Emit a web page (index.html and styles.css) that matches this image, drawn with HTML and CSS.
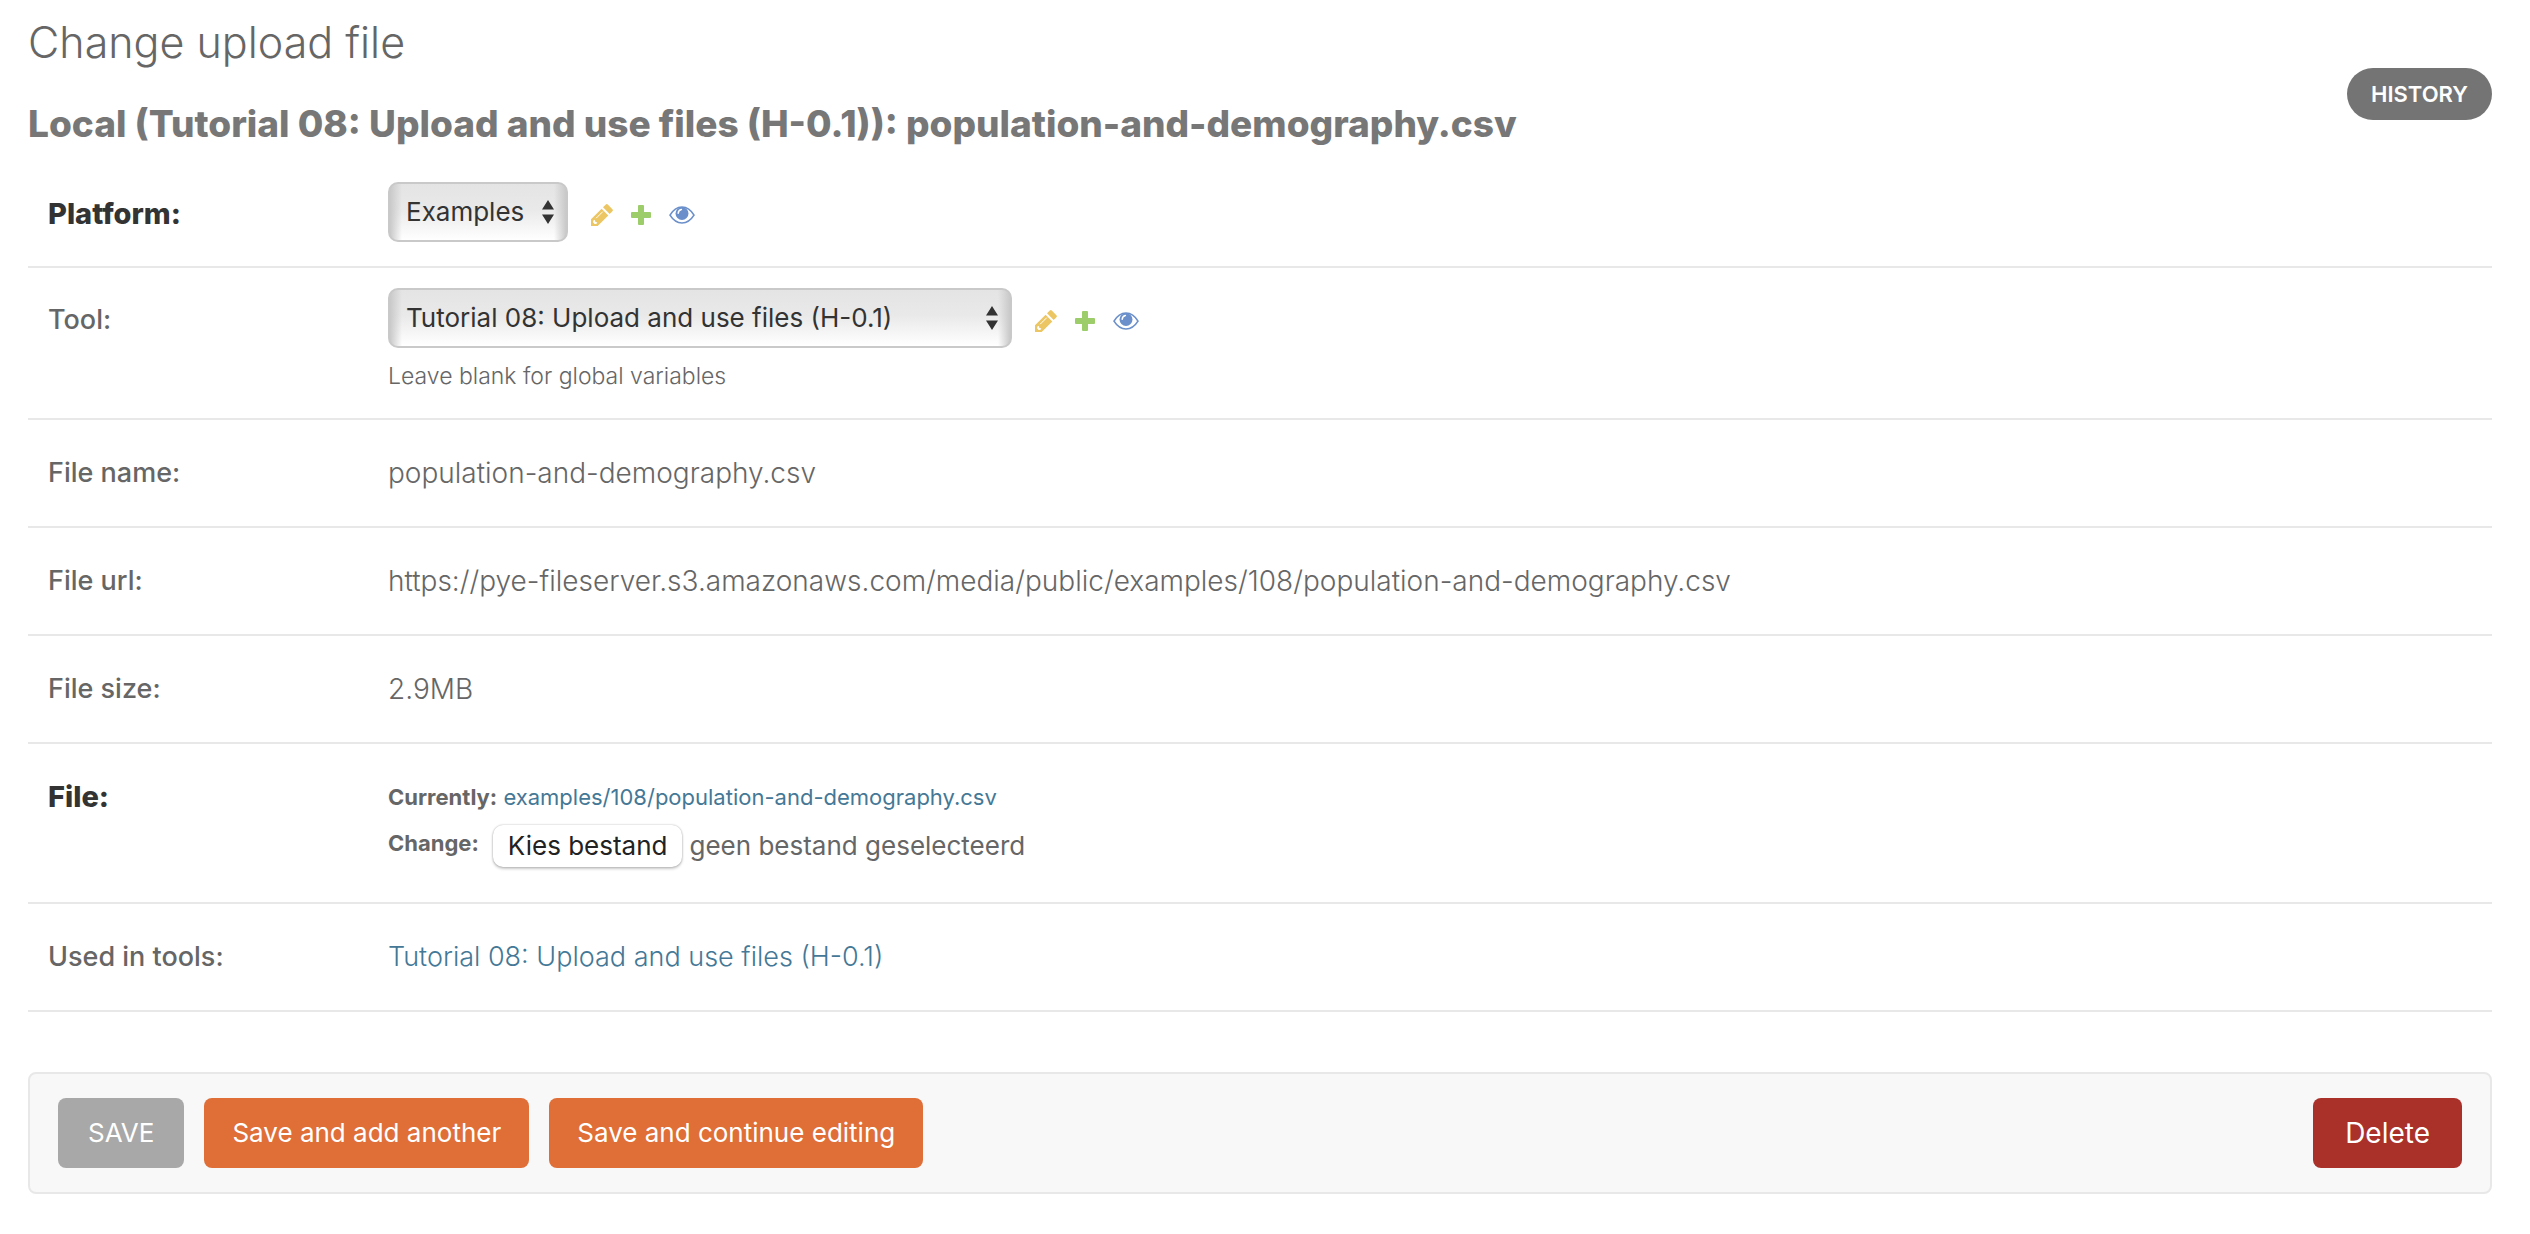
FILE: index.html
```html
<!DOCTYPE html>
<html lang="en">
<head>
  <meta charset="UTF-8">
  <title>Change upload file</title>
  <meta name="viewport" content="width=device-width, initial-scale=1.0">
  <link rel="stylesheet" href="styles.css">
</head>
<body>
  <!-- Icon sprites -->
  <svg class="sprites" aria-hidden="true">
    <symbol id="icon-change" viewBox="0 0 22 22">
      <path fill="#ecc663" d="M0 22V15.300L10.600 4.700l6.700 6.700L6.700 22zM12 3.300L14.800.6q1-1 2 0l4.600 4.600q1 1 0 2L18.700 10z"/>
      <path fill="#fff" d="M2.200 16.800l1.500-1 .6 2 2 .6-1 1.600H3.600l-1.400-1.400z"/>
      <path stroke="#fff" stroke-width="1" d="M5.200 14.200l6.500-6.500"/>
    </symbol>
    <symbol id="icon-add" viewBox="0 0 20 20">
      <path fill="#9dcd6b" d="M8 0h4q1 0 1 1v6h6q1 0 1 1v4q0 1-1 1h-6v6q0 1-1 1H8q-1 0-1-1v-6H1q-1 0-1-1V8q0-1 1-1h6V1q0-1 1-1z"/>
    </symbol>
    <symbol id="icon-view" viewBox="0 0 26 18">
      <path fill="none" stroke="#6a8fca" stroke-width="1.600" d="M1 9.200C4 4 8 1 13 1s9 3 12 8.200C22 14 18 17 13 17S4 14 1 9.200z"/>
      <circle cx="13" cy="7.500" r="6.500" fill="#6a8fca"/>
      <path fill="none" stroke="#fff" stroke-width="1.500" stroke-linecap="round" d="M9.200 7.200q.2-3 3.200-3.700"/>
    </symbol>
    <symbol id="icon-arrows" viewBox="0 0 12 24">
      <path fill="#333" d="M6 0l6 9.500H0zM0 14.500h12L6 24z"/>
    </symbol>
  </svg>

  <main class="content">
    <h1 class="title">Change upload file</h1>
    <div class="object-header">
      <h2 class="object-name">Local (Tutorial 08: Upload and use files (H-0.1)): population-and-demography.csv</h2>
      <a class="history-link" href="#">HISTORY</a>
    </div>

    <form>
      <div class="form-row form-row-field">
        <label class="row-label required" for="id_platform">Platform:</label>
        <div class="related-widget">
          <div class="select-box">
            <select id="id_platform" class="select select-platform">
              <option>Examples</option>
            </select>
            <svg class="select-arrows"><use href="#icon-arrows"/></svg>
          </div>
          <a class="related-link" href="#" title="Change"><svg class="icon-change"><use href="#icon-change"/></svg></a>
          <a class="related-link" href="#" title="Add"><svg class="icon-add"><use href="#icon-add"/></svg></a>
          <a class="related-link" href="#" title="View"><svg class="icon-view"><use href="#icon-view"/></svg></a>
        </div>
      </div>

      <div class="form-row form-row-field">
        <label class="row-label" for="id_tool">Tool:</label>
        <div>
          <div class="related-widget">
            <div class="select-box">
              <select id="id_tool" class="select select-tool">
                <option>Tutorial 08: Upload and use files (H-0.1)</option>
              </select>
              <svg class="select-arrows"><use href="#icon-arrows"/></svg>
            </div>
            <a class="related-link" href="#" title="Change"><svg class="icon-change"><use href="#icon-change"/></svg></a>
            <a class="related-link" href="#" title="Add"><svg class="icon-add"><use href="#icon-add"/></svg></a>
            <a class="related-link" href="#" title="View"><svg class="icon-view"><use href="#icon-view"/></svg></a>
          </div>
          <p class="help">Leave blank for global variables</p>
        </div>
      </div>

      <div class="form-row">
        <span class="row-label">File name:</span>
        <span class="readonly">population-and-demography.csv</span>
      </div>
      <div class="form-row">
        <span class="row-label">File url:</span>
        <span class="readonly">https://pye-fileserver.s3.amazonaws.com/media/public/examples/108/population-and-demography.csv</span>
      </div>
      <div class="form-row">
        <span class="row-label">File size:</span>
        <span class="readonly">2.9MB</span>
      </div>

      <div class="form-row">
        <label class="row-label required" for="id_file">File:</label>
        <div class="file-upload">
          <div><b>Currently:</b> <a href="#">examples/108/population-and-demography.csv</a></div>
          <div class="file-change">
            <b class="file-change-label">Change:</b>
            <input type="file" id="id_file" class="file-input">
            <label class="file-button" for="id_file">Kies bestand</label>
            <span class="file-status">geen bestand geselecteerd</span>
          </div>
        </div>
      </div>

      <div class="form-row">
        <span class="row-label">Used in tools:</span>
        <a class="tool-link" href="#">Tutorial 08: Upload and use files (H-0.1)</a>
      </div>

      <div class="submit-row">
        <button type="submit" class="button button-save">SAVE</button>
        <button type="submit" class="button">Save and add another</button>
        <button type="submit" class="button">Save and continue editing</button>
        <a class="button button-delete" href="#">Delete</a>
      </div>
    </form>
  </main>
</body>
</html>
```

FILE: styles.css
```css
* {
  box-sizing: border-box;
}

body {
  margin: 0;
  font-family: Inter, "Open Sans", sans-serif;
  font-size: 26px;
  line-height: 40px;
  color: #666;
  background: #fff;
}

a {
  color: #447896;
  text-decoration: none;
}

.sprites {
  display: none;
}

.content {
  padding: 16px 38px 40px 28px;
}

/* Headings */
.title {
  margin: 0;
  font-size: 43px;
  line-height: 52px;
  font-weight: 300;
}

.object-header {
  display: flex;
  justify-content: space-between;
  align-items: flex-start;
  min-height: 94px;
}

.object-name {
  margin: 36px 0 0;
  font-size: 37px;
  line-height: 40px;
  font-weight: 800;
  color: #777;
}

.history-link {
  padding: 0 24px;
  border-radius: 26px;
  font-size: 22px;
  line-height: 52px;
  font-weight: 600;
  color: #fff;
  background: #747474;
}

/* Form rows */
.form-row {
  display: flex;
  padding: 33px 20px;
  border-bottom: 2px solid #e8e8e8;
}

.form-row-field {
  padding: 20px 20px 24px;
}

.row-label {
  flex: none;
  width: 340px;
  font-size: 27px;
  font-weight: 500;
}

.form-row-field .row-label {
  padding-top: 12px;
}

.row-label.required {
  font-size: 29px;
  font-weight: 800;
  color: #333;
}

.readonly {
  font-size: 28px;
  font-weight: 300;
}

.tool-link {
  font-size: 27px;
  font-weight: 300;
}

.help {
  margin: 10px 0 0;
  font-size: 23px;
  line-height: 36px;
  font-weight: 300;
}

/* Selects with their add / change / view links */
.related-widget {
  display: flex;
  align-items: center;
}

.select-box {
  position: relative;
  margin-right: 23px;
}

.select {
  display: block;
  height: 60px;
  padding: 0 40px 0 16px;
  border: 2px solid #c9c9c9;
  border-radius: 10px;
  appearance: none;
  font: inherit;
  color: #333;
  background:
    linear-gradient(90deg, #c9c9c9, rgba(220, 220, 220, 0) 12px),
    linear-gradient(270deg, #c9c9c9, rgba(220, 220, 220, 0) 12px),
    linear-gradient(#e4e4e4, #e9e9e9 45%, #fff);
}

.select-platform {
  width: 180px;
}

.select-tool {
  width: 624px;
}

.select-arrows {
  position: absolute;
  top: 18px;
  right: 14px;
  width: 12px;
  height: 24px;
  pointer-events: none;
}

.related-link {
  display: flex;
  padding-top: 5px;
  margin-right: 18px;
}

.icon-change {
  width: 22px;
  height: 22px;
}

.icon-add {
  width: 20px;
  height: 20px;
}

.icon-view {
  width: 26px;
  height: 18px;
}

/* File upload */
.file-upload {
  padding-bottom: 2px;
  font-size: 22px;
}

.file-change {
  display: flex;
  align-items: flex-start;
  margin-top: 8px;
}

.file-change-label {
  line-height: 36px;
}

.file-input {
  position: absolute;
  width: 1px;
  height: 1px;
  opacity: 0;
}

.file-button {
  margin: 0 7px 0 14px;
  padding: 0 15px;
  border-radius: 10px;
  font-size: 26px;
  line-height: 42px;
  color: #222;
  background: #fff;
  box-shadow: 0 0 2px rgba(0, 0, 0, 0.3), 0 2px 3px rgba(0, 0, 0, 0.2);
}

.file-status {
  font-size: 26px;
  line-height: 42px;
}

/* Submit bar */
.submit-row {
  display: flex;
  gap: 20px;
  margin-top: 60px;
  padding: 24px 28px;
  border: 2px solid #e8e8e8;
  border-radius: 8px;
  background: #f8f8f8;
}

.button {
  padding: 0 28px;
  border: 0;
  border-radius: 8px;
  font: inherit;
  line-height: 70px;
  color: #fff;
  background: #df6e37;
}

.button-save {
  padding: 0 30px;
  background: #a8a8a8;
}

.button-delete {
  margin-left: auto;
  padding: 0 32px;
  font-size: 28px;
  background: #aa302a;
}
```
